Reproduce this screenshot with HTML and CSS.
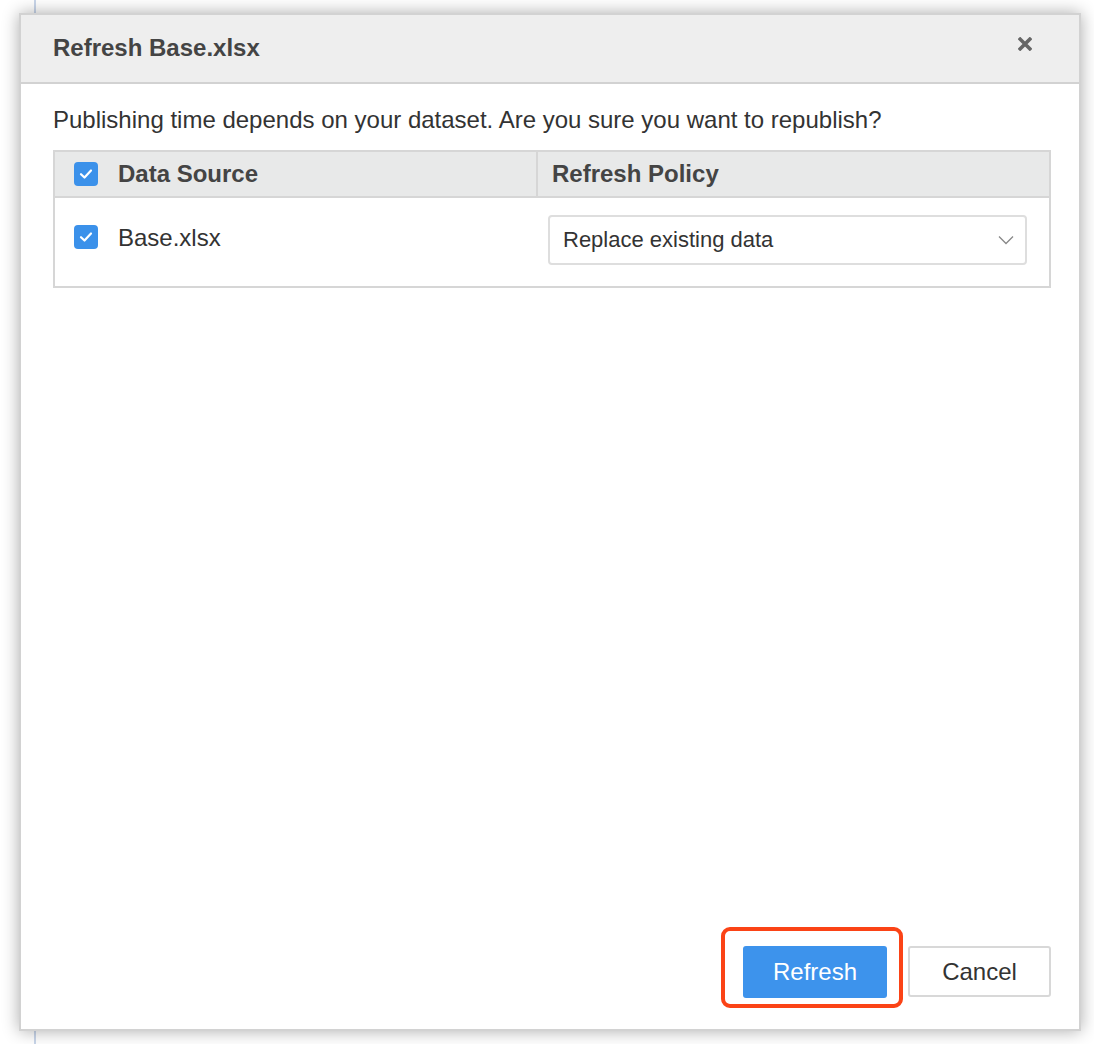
FILE: index.html
```html
<!DOCTYPE html>
<html lang="en">
<head>
<meta charset="utf-8">
<title>Refresh Base.xlsx</title>
<link rel="stylesheet" href="styles.css">
</head>
<body>
<div class="dialog">
  <div class="dialog-header">
    <h1 class="dialog-title">Refresh Base.xlsx</h1>
    <button class="close-btn" aria-label="Close">
      <svg width="14" height="14" viewBox="0 0 14 14"><path d="M2.2 2.2 L11.8 11.8 M11.8 2.2 L2.2 11.8" stroke="#666" stroke-width="3.6" stroke-linecap="square"/></svg>
    </button>
  </div>
  <div class="dialog-body">
    <p class="prompt">Publishing time depends on your dataset. Are you sure you want to republish?</p>
    <div class="sources">
      <div class="row head">
        <div class="cell source">
          <span class="check"><svg width="14" height="12" viewBox="0 0 14 12"><path d="M2 6.2 L5.5 9.5 L12 2.5" fill="none" stroke="#fff" stroke-width="2.2" stroke-linecap="round" stroke-linejoin="round"/></svg></span>
          Data Source
        </div>
        <div class="cell policy">Refresh Policy</div>
      </div>
      <div class="row item">
        <div class="cell source">
          <span class="check"><svg width="14" height="12" viewBox="0 0 14 12"><path d="M2 6.2 L5.5 9.5 L12 2.5" fill="none" stroke="#fff" stroke-width="2.2" stroke-linecap="round" stroke-linejoin="round"/></svg></span>
          Base.xlsx
        </div>
        <div class="cell policy">
          <div class="select">
            <span>Replace existing data</span>
            <svg width="16" height="10" viewBox="0 0 16 10"><path d="M1 1.5 L8 8.5 L15 1.5" fill="none" stroke="#888" stroke-width="1.3"/></svg>
          </div>
        </div>
      </div>
    </div>
  </div>
  <div class="dialog-footer">
    <div class="highlight">
      <button class="btn primary">Refresh</button>
    </div>
    <button class="btn secondary">Cancel</button>
  </div>
</div>
</body>
</html>
```

FILE: styles.css
```css
html, body {
  margin: 0;
  padding: 0;
}

body {
  width: 1094px;
  height: 1044px;
  overflow: hidden;
  font-family: "Liberation Sans", Arial, sans-serif;
  color: #333;
  background: linear-gradient(to right, transparent 34px, #c9d6ea 34px, #c9d6ea 36px, transparent 36px) #fff;
  padding-top: 13px;
  box-sizing: border-box;
}

.dialog {
  margin-left: 19px;
  width: 1062px;
  height: 1018px;
  box-sizing: border-box;
  background: #fff;
  border: 2px solid #d2d2d2;
  box-shadow: 0 0 16px rgba(0, 0, 0, 0.33);
  display: flex;
  flex-direction: column;
}

.dialog-header {
  height: 69px;
  flex: none;
  box-sizing: border-box;
  background: #eeeeee;
  border-bottom: 2px solid #d2d2d2;
  display: flex;
  align-items: flex-start;
  justify-content: space-between;
  padding: 19px 47px 0 32px;
}

.dialog-title {
  margin: 0;
  font-size: 24px;
  line-height: 28px;
  font-weight: bold;
  color: #444;
}

.close-btn {
  border: 0;
  background: none;
  padding: 0;
  margin-top: 3px;
  width: 14px;
  height: 14px;
  display: flex;
}

.dialog-body {
  flex: 1;
  padding: 0 28px 0 32px;
}

.prompt {
  margin: 22px 0 16px;
  font-size: 24px;
  line-height: 28px;
  color: #333;
}

.sources {
  border: 2px solid #d6d6d6;
}

.row {
  display: flex;
}

.row.head {
  height: 44px;
  background: #e8e9e9;
  border-bottom: 2px solid #d6d6d6;
  font-size: 24px;
  font-weight: bold;
  color: #444;
}

.row.head .cell {
  display: flex;
  align-items: center;
}

.row.head .policy {
  border-left: 2px solid #d6d6d6;
  padding-left: 14px;
}

.cell.source {
  width: 481px;
  box-sizing: border-box;
  padding-left: 19px;
  display: flex;
  align-items: center;
  gap: 20px;
}

.cell.policy {
  flex: 1;
}

.row.item {
  height: 88px;
  font-size: 24px;
  color: #333;
}

.row.item .cell.source {
  align-items: flex-start;
  padding-top: 26px;
}

.row.item .cell.policy {
  padding: 17px 22px 0 12px;
}

.check {
  width: 24px;
  height: 24px;
  flex: none;
  border-radius: 4px;
  background: #3b91ea;
  display: flex;
  align-items: center;
  justify-content: center;
}

.row.item .check {
  margin-top: 1px;
}

.select {
  height: 50px;
  box-sizing: border-box;
  border: 2px solid #dedede;
  border-radius: 4px;
  display: flex;
  align-items: center;
  justify-content: space-between;
  padding: 0 11px 0 13px;
  font-size: 22px;
  color: #333;
}

.dialog-footer {
  flex: none;
  display: flex;
  justify-content: flex-end;
  align-items: flex-end;
  gap: 5px;
  padding: 0 28px 21px 0;
}

.highlight {
  border: 4px solid #fb4316;
  border-radius: 9px;
  padding: 15px 12px 6px 18px;
}

.btn {
  font-family: "Liberation Sans", Arial, sans-serif;
  font-size: 24px;
  border-radius: 3px;
  box-sizing: border-box;
}

.btn.primary {
  width: 144px;
  height: 52px;
  background: #3d93ec;
  border: 0;
  color: #fff;
  display: block;
}

.btn.secondary {
  width: 143px;
  height: 51px;
  background: #fff;
  border: 2px solid #d8d8d8;
  color: #333;
  margin-bottom: 11px;
}
```
